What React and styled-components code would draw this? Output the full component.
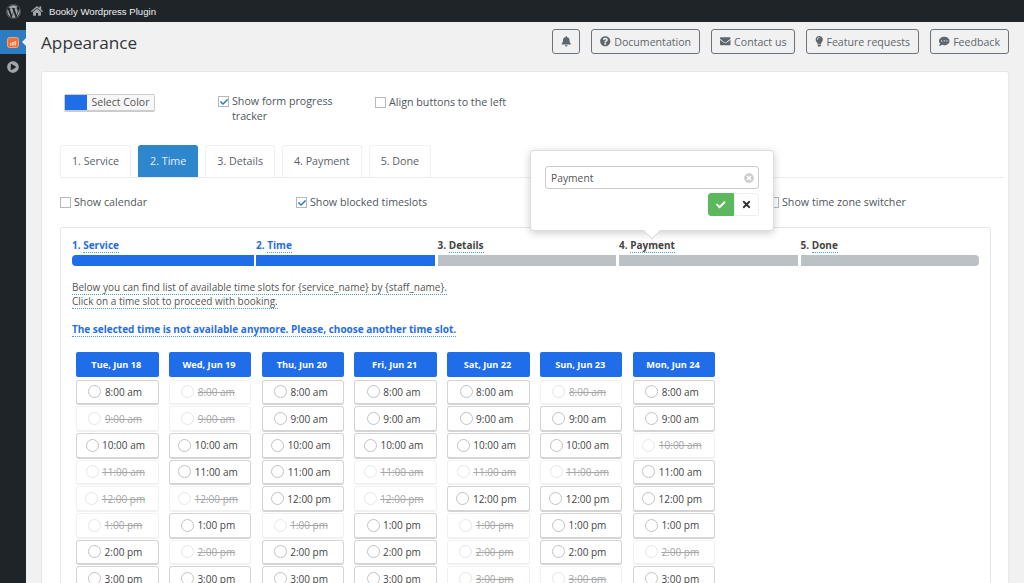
import React from 'react'
import styled, { createGlobalStyle } from 'styled-components'
import {
  FaBell,
  FaCheck,
  FaCommentDots,
  FaEnvelope,
  FaHome,
  FaLightbulb,
  FaPlayCircle,
  FaQuestionCircle,
  FaTimes,
  FaTimesCircle,
  FaWordpress,
} from 'react-icons/fa'

const BLUE = '#1f6de8'

const GlobalStyle = createGlobalStyle`
  html, body {
    margin: 0;
    height: 583px;
    overflow: hidden;
    background: #f1f1f1;
    font-family: "Open Sans", "Liberation Sans", sans-serif;
    color: #444;
  }
  * { box-sizing: border-box; }
`

const TopBar = styled.header`
  height: 22px;
  background: #1f2429;
  display: flex;
  align-items: center;
  color: #eee;
  font-family: "Liberation Sans", sans-serif;
  font-size: 9.6px;
`
const TopLogo = styled.div`
  width: 26px;
  display: flex;
  justify-content: center;
  color: #a0a5aa;
  font-size: 15px;
`
const TopHome = styled.span`
  display: flex;
  margin: 0 6px 0 5px;
  color: #a0a5aa;
  font-size: 12px;
`

const Body = styled.div`
  display: flex;
  height: 561px;
`
const Side = styled.nav`
  width: 26px;
  background: #1f2429;
  padding-top: 8px;
  flex-shrink: 0;
`
const SideActive = styled.div`
  height: 24px;
  background: #2b7cc0;
  display: flex;
  align-items: center;
  justify-content: center;
  position: relative;
  svg { margin-left: -1px; }
  &::after {
    content: '';
    position: absolute;
    right: 0;
    top: 8px;
    border: 4px solid transparent;
    border-right-color: #f1f1f1;
  }
`
const SidePlay = styled.div`
  height: 26px;
  display: flex;
  align-items: center;
  justify-content: center;
  color: #a0a5aa;
  font-size: 12px;
`

const Main = styled.main`
  flex: 1;
  padding: 0 15px;
  min-width: 0;
`
const PageHead = styled.div`
  height: 49px;
  display: flex;
  align-items: center;
  justify-content: space-between;
  padding-bottom: 10px;
`
const Title = styled.h1`
  margin: 1px 0 0;
  font-size: 17.2px;
  font-weight: 400;
  color: #32373c;
`
const HeadActions = styled.div`
  display: flex;
  gap: 11px;
`
const HeadBtn = styled.button`
  height: 25px;
  padding: 0 8px;
  display: flex;
  align-items: center;
  gap: 3.5px;
  background: #f1f1f1;
  border: 1px solid #6c757d;
  border-radius: 3px;
  color: #5f676e;
  font: 400 10.6px "Open Sans", sans-serif;
  svg {
    font-size: 10.5px;
    margin: 0 ${(p) => p.$iconInset || '0'};
  }
`

const Card = styled.section`
  background: #fff;
  border: 1px solid #e6e8ec;
  border-radius: 3px;
  padding: 22px 4px 0 18px;
  height: 600px;
`
const TopOptions = styled.div`
  display: flex;
  align-items: flex-start;
  padding-left: 4px;
  height: 51px;
`
const ColorBtn = styled.div`
  width: 91px;
  height: 18px;
  display: flex;
  border: 1px solid #ccc;
  border-bottom-width: 2px;
  border-radius: 2px;
  margin-right: 63px;
`
const Swatch = styled.div`
  width: 22px;
  background: ${BLUE};
`
const SwatchLabel = styled.div`
  flex: 1;
  font-size: 10.5px;
  line-height: 15px;
  text-align: center;
  color: #555;
  background: #f7f7f7;
`
const CheckLabel = styled.label`
  display: flex;
  align-items: flex-start;
  gap: 3px;
  width: ${(p) => p.$width || 'auto'};
  margin-top: ${(p) => p.$drop || '0'};
  font-size: 10.7px;
  line-height: 15px;
  color: #50575e;
`
const Box = styled.span`
  width: 11px;
  height: 11px;
  margin-top: 2px;
  flex-shrink: 0;
  border: 1px solid #b4b9be;
  background: #fff;
  display: flex;
  align-items: center;
  justify-content: center;
  color: #2b7cc0;
  font-size: 8px;
`

const Tabs = styled.div`
  display: flex;
  gap: 7px;
  height: 33px;
  border-bottom: 1px solid #e9ecef;
`
const Tab = styled.div`
  height: 32px;
  padding: 0 11px 1px;
  display: flex;
  align-items: center;
  font-size: 10.7px;
  color: ${(p) => (p.$active ? '#e8f1f9' : '#5a6268')};
  background: ${(p) => (p.$active ? '#2e86cc' : '#fff')};
  border: 1px solid ${(p) => (p.$active ? '#2e86cc' : '#eef0f3')};
  border-bottom: 0;
  border-radius: 3px 3px 0 0;
`
const CheckRow = styled.div`
  display: grid;
  grid-template-columns: repeat(4, 236px);
  height: 49px;
  padding-top: 17px;
`

const Preview = styled.div`
  width: 931px;
  height: 400px;
  border: 1px solid #e4e8ee;
  border-radius: 2px;
  padding: 10px 11px 0;
`
const Steps = styled.div`
  display: grid;
  grid-template-columns: 181.5px repeat(4, 178.9px);
  gap: 2.6px;
  width: 907px;
`
const Step = styled.div`
  font-size: 10px;
  font-weight: 700;
  line-height: 15px;
  color: ${(p) => (p.$done ? BLUE : '#444')};
`
const Bar = styled.div`
  height: 11px;
  margin-top: 2px;
  background: ${(p) => (p.$done ? BLUE : '#bcc1c6')};
  border-radius: ${(p) => (p.$first ? '4px 0 0 4px' : p.$last ? '0 4px 4px 0' : '0')};
`
const Dotted = styled.span`
  border-bottom: 1px dotted #4a9fdc;
`
const Intro = styled.p`
  margin: 14px 0 0;
  font-size: 10px;
  line-height: 14px;
  color: #555;
`
const Alert = styled.p`
  margin: 14px 0 0;
  font-size: 10px;
  line-height: 14px;
  font-weight: 700;
  color: ${BLUE};
`
const Slots = styled.div`
  display: grid;
  grid-template-columns: repeat(7, 82.5px);
  column-gap: 10.3px;
  margin: 16px 0 0 4px;
`
const Day = styled.div`
  display: flex;
  flex-direction: column;
`
const DayHead = styled.div`
  height: 25px;
  margin-bottom: 2.5px;
  background: ${BLUE};
  border-radius: 2px;
  color: #fff;
  font-size: 9.2px;
  font-weight: 700;
  display: flex;
  align-items: center;
  justify-content: center;
  padding-right: 2px;
`
const Slot = styled.div`
  height: 25.7px;
  margin-bottom: 1px;
  padding-right: 4px;
  display: flex;
  align-items: center;
  justify-content: center;
  gap: 3.5px;
  border: 1px solid ${(p) => (p.$off ? '#f1f1f1' : '#d4d4d4')};
  border-bottom-width: 2px;
  border-radius: 3px;
  font-size: 10px;
  color: ${(p) => (p.$off ? '#a6a6a6' : '#444')};
  text-decoration: ${(p) => (p.$off ? 'line-through' : 'none')};
`
const Radio = styled.span`
  width: 13px;
  height: 13px;
  border-radius: 50%;
  border: 1px solid ${(p) => (p.$off ? '#e6e6e6' : '#bfc3c7')};
`

const Popover = styled.div`
  position: absolute;
  left: 530px;
  top: 150px;
  width: 244px;
  height: 81px;
  background: #fff;
  border: 1px solid #dcdcdc;
  border-radius: 4px;
  box-shadow: 0 2px 8px rgba(0, 0, 0, 0.2);
  padding: 15px 14px 0;
  &::after {
    content: '';
    position: absolute;
    left: 115px;
    top: 74px;
    width: 11px;
    height: 11px;
    background: #fff;
    transform: rotate(45deg);
    border-right: 1px solid #dcdcdc;
    border-bottom: 1px solid #dcdcdc;
  }
`
const PopInput = styled.div`
  height: 23px;
  border: 1px solid #ccc;
  border-radius: 3px;
  display: flex;
  align-items: center;
  justify-content: space-between;
  padding: 0 4px 0 5px;
  font-size: 10.3px;
  color: #555;
  svg { color: #ccc; font-size: 10px; }
`
const PopActions = styled.div`
  display: flex;
  justify-content: flex-end;
  margin-top: 4px;
`
const PopBtn = styled.div`
  width: 25.5px;
  height: 23px;
  display: flex;
  align-items: center;
  justify-content: center;
  font-size: ${(p) => (p.$ok ? '9.5px' : '11px')};
  color: ${(p) => (p.$ok ? '#fff' : '#333')};
  background: ${(p) => (p.$ok ? '#5cb85c' : '#fff')};
  border: 1px solid ${(p) => (p.$ok ? '#5cb85c' : '#eee')};
  border-radius: ${(p) => (p.$ok ? '3px 0 0 3px' : '0 3px 3px 0')};
`

const steps = ['1. Service', '2. Time', '3. Details', '4. Payment', '5. Done']
const hours = ['8:00 am', '9:00 am', '10:00 am', '11:00 am', '12:00 pm', '1:00 pm', '2:00 pm', '3:00 pm']
const days = [
  ['Tue, Jun 18', '10100011'],
  ['Wed, Jun 19', '00110101'],
  ['Thu, Jun 20', '11111011'],
  ['Fri, Jun 21', '11100111'],
  ['Sat, Jun 22', '11101000'],
  ['Sun, Jun 23', '01101110'],
  ['Mon, Jun 24', '11011101'],
]

const AppearanceIcon = () => (
  <svg width="12" height="11" viewBox="0 0 12 11">
    <rect x="0.5" y="0.5" width="11" height="10" rx="2" fill="#ee7138" stroke="#f6a37c" />
    <path d="M3 6h1.5v2.5H3zM5.3 5h1.5v3.5H5.3zM7.6 4h1.5v4.5H7.6z" fill="#fbd9c6" />
  </svg>
)

const App = () => {
  return (
    <>
      <GlobalStyle />
      <TopBar>
        <TopLogo>
          <FaWordpress />
        </TopLogo>
        <TopHome>
          <FaHome />
        </TopHome>
        Bookly Wordpress Plugin
      </TopBar>
      <Body>
        <Side>
          <SideActive>
            <AppearanceIcon />
          </SideActive>
          <SidePlay>
            <FaPlayCircle />
          </SidePlay>
        </Side>
        <Main>
          <PageHead>
            <Title>Appearance</Title>
            <HeadActions>
              <HeadBtn aria-label="Notifications">
                <FaBell />
              </HeadBtn>
              <HeadBtn>
                <FaQuestionCircle />
                Documentation
              </HeadBtn>
              <HeadBtn>
                <FaEnvelope />
                Contact us
              </HeadBtn>
              <HeadBtn $iconInset="-1.5px">
                <FaLightbulb />
                Feature requests
              </HeadBtn>
              <HeadBtn>
                <FaCommentDots />
                Feedback
              </HeadBtn>
            </HeadActions>
          </PageHead>
          <Card>
            <TopOptions>
              <ColorBtn>
                <Swatch />
                <SwatchLabel>Select Color</SwatchLabel>
              </ColorBtn>
              <CheckLabel $width="157px">
                <Box>
                  <FaCheck />
                </Box>
                <span>
                  Show form progress
                  <br />
                  tracker
                </span>
              </CheckLabel>
              <CheckLabel $drop="1px">
                <Box />
                Align buttons to the left
              </CheckLabel>
            </TopOptions>
            <Tabs>
              {steps.map((s, i) => (
                <Tab key={s} $active={i === 1}>
                  {s}
                </Tab>
              ))}
            </Tabs>
            <CheckRow>
              <CheckLabel>
                <Box />
                Show calendar
              </CheckLabel>
              <CheckLabel>
                <Box>
                  <FaCheck />
                </Box>
                Show blocked timeslots
              </CheckLabel>
              <span />
              <CheckLabel>
                <Box />
                Show time zone switcher
              </CheckLabel>
            </CheckRow>
            <Preview>
              <Steps>
                {steps.map((s, i) => {
                  const [num, name] = s.split(' ')
                  return (
                    <div key={s}>
                      <Step $done={i < 2}>
                        {num} <Dotted>{name}</Dotted>
                      </Step>
                      <Bar $done={i < 2} $first={i === 0} $last={i === 4} />
                    </div>
                  )
                })}
              </Steps>
              <Intro>
                <Dotted>Below you can find list of available time slots for {'{service_name}'} by {'{staff_name}'}.</Dotted>
                <br />
                <Dotted>Click on a time slot to proceed with booking.</Dotted>
              </Intro>
              <Alert>
                <Dotted>The selected time is not available anymore. Please, choose another time slot.</Dotted>
              </Alert>
              <Slots>
                {days.map(([label, open]) => (
                  <Day key={label}>
                    <DayHead>{label}</DayHead>
                    {hours.map((h, i) => {
                      const off = open[i] === '0'
                      return (
                        <Slot key={h} $off={off}>
                          <Radio $off={off} />
                          {h}
                        </Slot>
                      )
                    })}
                  </Day>
                ))}
              </Slots>
            </Preview>
          </Card>
        </Main>
      </Body>
      <Popover>
        <PopInput>
          Payment
          <FaTimesCircle />
        </PopInput>
        <PopActions>
          <PopBtn $ok>
            <FaCheck />
          </PopBtn>
          <PopBtn>
            <FaTimes />
          </PopBtn>
        </PopActions>
      </Popover>
    </>
  )
}

export default App
